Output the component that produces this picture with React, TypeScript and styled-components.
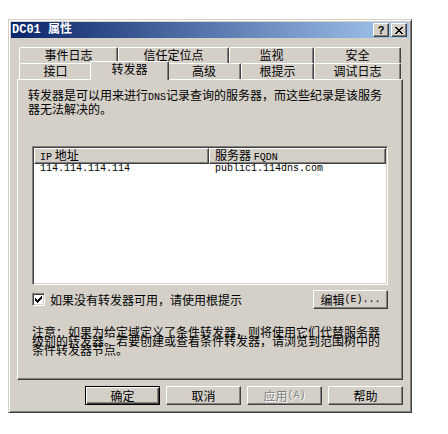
import React from "react";
import styled, { createGlobalStyle, css } from "styled-components";

const face = "#d4d0c8";
const shadow = "#808080";
const darkShadow = "#404040";

const GlobalStyle = createGlobalStyle`
  body {
    margin: 0;
    background: #fff;
    font-family: "Noto Sans CJK SC", "Liberation Sans", sans-serif;
    font-size: 12px;
    color: #000;
  }
`;

const Window = styled.div`
  box-sizing: border-box;
  width: 404px;
  height: 394px;
  margin: 19px 0 0 8px;
  padding: 2px;
  background: ${face};
  border: 1px solid;
  border-color: ${face} ${darkShadow} ${darkShadow} ${face};
  box-shadow: inset 1px 1px 0 #fff, inset -1px -1px 0 ${shadow};
  display: flex;
  flex-direction: column;
`;

const TitleBar = styled.div`
  flex: none;
  height: 16px;
  display: flex;
  align-items: center;
  padding: 0 2px 0 1px;
  background: linear-gradient(to right, #0a246a, #a6caf0);
`;

const Title = styled.div`
  flex: 1;
  color: #fff;
  font-family: "Liberation Mono", "Noto Sans CJK SC", monospace;
  font-weight: bold;
  font-size: 12px;
  line-height: 16px;
  white-space: pre;
`;

const CaptionButton = styled.div<{ $gap?: number }>`
  box-sizing: border-box;
  width: 16px;
  height: 14px;
  margin-left: ${(p) => p.$gap ?? 0}px;
  background: ${face};
  border: 1px solid;
  border-color: #fff ${darkShadow} ${darkShadow} #fff;
  box-shadow: inset -1px -1px 0 ${shadow};
  display: flex;
  align-items: center;
  justify-content: center;
  font-family: "Liberation Sans", sans-serif;
  font-weight: bold;
  font-size: 11px;
  line-height: 12px;
`;

const Body = styled.div`
  flex: 1;
  display: flex;
  flex-direction: column;
  padding: 9px 6px 5px;
`;

const TabRow = styled.div`
  display: flex;
  height: 16px;
  margin: 0 2px;
`;

const Tab = styled.div<{ $w: number; $active?: boolean }>`
  box-sizing: border-box;
  flex: none;
  width: ${(p) => p.$w}px;
  background: ${face};
  border: 1px solid;
  border-bottom: none;
  border-color: #fff ${darkShadow} transparent #fff;
  border-radius: 2px 2px 0 0;
  box-shadow: inset -1px 0 0 ${shadow};
  text-align: center;
  line-height: 14px;
  white-space: nowrap;
  ${(p) =>
    p.$active &&
    css`
      width: ${p.$w + 4}px;
      height: 19px;
      margin: -2px -2px 0;
      position: relative;
      z-index: 1;
    `}
`;

const Panel = styled.div`
  box-sizing: border-box;
  height: 301px;
  flex: none;
  border: 1px solid;
  border-color: #fff ${darkShadow} ${darkShadow} #fff;
  box-shadow: inset -1px -1px 0 ${shadow};
  display: flex;
  flex-direction: column;
  padding: 9px 14px 0;
`;

const Desc = styled.p`
  margin: 0 0 0 -4px;
  width: 358px;
  line-height: 11px;
`;

const Mono = styled.span`
  font-family: "Liberation Mono", monospace;
  font-size: 10px;
`;

const ListView = styled.div`
  box-sizing: border-box;
  height: 139px;
  margin-top: 32px;
  padding: 1px;
  background: #fff;
  border: 1px solid;
  border-color: ${shadow} #fff #fff ${shadow};
  box-shadow: inset 1px 1px 0 ${darkShadow}, inset -1px -1px 0 ${face};
`;

const Columns = styled.div<{ $h: number }>`
  display: grid;
  grid-template-columns: 175px 1fr;
  height: ${(p) => p.$h}px;
`;

const HeaderCell = styled.div`
  box-sizing: border-box;
  background: ${face};
  border: 1px solid;
  border-color: #fff ${darkShadow} ${darkShadow} #fff;
  box-shadow: inset -1px -1px 0 ${shadow};
  padding-left: 5px;
  line-height: 11px;
  white-space: nowrap;
`;

const Cell = styled.div`
  padding-left: 6px;
  font-family: "Liberation Mono", monospace;
  font-size: 10px;
  line-height: 13px;
  white-space: nowrap;
`;

const OptionRow = styled.div`
  display: flex;
  align-items: center;
  justify-content: space-between;
  height: 19px;
  margin-top: 5px;
`;

const CheckLabel = styled.label`
  display: flex;
  align-items: center;
  gap: 5px;
`;

const CheckBox = styled.span`
  box-sizing: border-box;
  width: 13px;
  height: 13px;
  background: #fff;
  border: 1px solid;
  border-color: ${shadow} #fff #fff ${shadow};
  box-shadow: inset 1px 1px 0 ${darkShadow}, inset -1px -1px 0 ${face};
  display: flex;
  align-items: center;
  justify-content: center;
`;

const Note = styled.p`
  margin: 18px 0 0;
  width: 352px;
  line-height: 9px;
`;

const ButtonRow = styled.div`
  display: flex;
  justify-content: flex-end;
  gap: 6px;
  margin-top: 6px;
`;

const Button = styled.div<{ $w?: number; $default?: boolean; $disabled?: boolean }>`
  box-sizing: border-box;
  width: ${(p) => p.$w ?? 75}px;
  height: 19px;
  display: flex;
  align-items: center;
  justify-content: center;
  background: ${face};
  border: 1px solid;
  border-color: #fff ${darkShadow} ${darkShadow} #fff;
  box-shadow: inset -1px -1px 0 ${shadow};
  line-height: 14px;
  white-space: nowrap;
  ${(p) =>
    p.$default &&
    css`
      border-color: #000;
      box-shadow: inset 1px 1px 0 #fff, inset -1px -1px 0 ${darkShadow},
        inset -2px -2px 0 ${shadow};
    `}
  ${(p) =>
    p.$disabled &&
    css`
      color: ${shadow};
      text-shadow: 1px 1px 0 #fff;
    `}
`;

const Pixels = ({ rows }: { rows: string[] }) => (
  <svg
    width={rows[0].length}
    height={rows.length}
    shapeRendering="crispEdges"
  >
    {rows.map((r, y) =>
      r.split("").map((c, x) =>
        c === "#" ? <rect key={`${x}-${y}`} x={x} y={y} width={1} height={1} fill="#000" /> : null
      )
    )}
  </svg>
);

const closeGlyph = [
  "##....##",
  ".##..##.",
  "..####..",
  "...##...",
  "..####..",
  ".##..##.",
  "##....##",
];

const checkGlyph = [
  "......#",
  ".....##",
  "#...###",
  "##.###.",
  "#####..",
  ".###...",
  "..#....",
];

const tabsBack = [
  { label: "事件日志", w: 99 },
  { label: "信任定位点", w: 111 },
  { label: "监视", w: 85 },
  { label: "安全", w: 87 },
];

const tabsFront = [
  { label: "接口", w: 73 },
  { label: "转发器", w: 75, active: true },
  { label: "高级", w: 74 },
  { label: "根提示", w: 73 },
  { label: "调试日志", w: 87 },
];

export default function App() {
  return (
    <>
      <GlobalStyle />
      <Window>
        <TitleBar>
          <Title>DC01 属性</Title>
          <CaptionButton>?</CaptionButton>
          <CaptionButton $gap={2}>
            <Pixels rows={closeGlyph} />
          </CaptionButton>
        </TitleBar>
        <Body>
          <TabRow>
            {tabsBack.map((t) => (
              <Tab key={t.label} $w={t.w}>
                {t.label}
              </Tab>
            ))}
          </TabRow>
          <TabRow>
            {tabsFront.map((t) => (
              <Tab key={t.label} $w={t.w} $active={t.active}>
                {t.label}
              </Tab>
            ))}
          </TabRow>
          <Panel>
            <Desc>
              转发器是可以用来进行<Mono>DNS</Mono>记录查询的服务器，而这些纪录是该服务器无法解决的。
            </Desc>
            <ListView>
              <Columns $h={14}>
                <HeaderCell>
                  <Mono>IP</Mono> 地址
                </HeaderCell>
                <HeaderCell>
                  服务器 <Mono>FQDN</Mono>
                </HeaderCell>
              </Columns>
              <Columns $h={13}>
                <Cell>114.114.114.114</Cell>
                <Cell>public1.114dns.com</Cell>
              </Columns>
            </ListView>
            <OptionRow>
              <CheckLabel>
                <CheckBox>
                  <Pixels rows={checkGlyph} />
                </CheckBox>
                如果没有转发器可用，请使用根提示
              </CheckLabel>
              <Button>
                编辑<Mono>(E)...</Mono>
              </Button>
            </OptionRow>
            <Note>
              注意：如果为给定域定义了条件转发器，则将使用它们代替服务器级别的转发器。若要创建或查看条件转发器，请浏览到范围树中的条件转发器节点。
            </Note>
          </Panel>
          <ButtonRow>
            <Button $default>确定</Button>
            <Button>取消</Button>
            <Button $disabled>
              应用<Mono>(A)</Mono>
            </Button>
            <Button>帮助</Button>
          </ButtonRow>
        </Body>
      </Window>
    </>
  );
}
